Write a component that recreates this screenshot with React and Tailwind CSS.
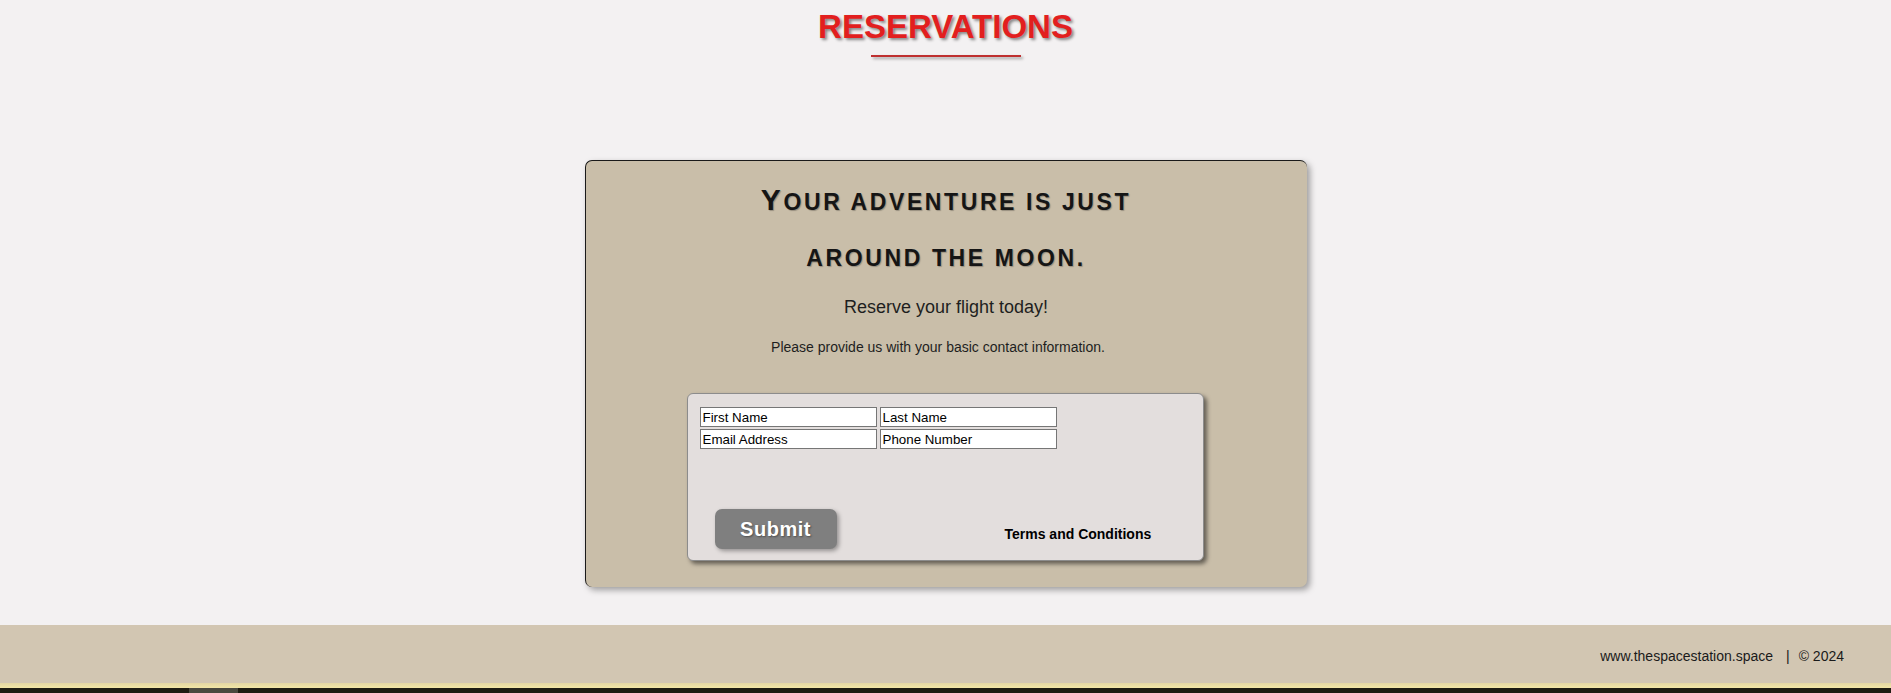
import React from "react";

export default function App() {
  const inputCls =
    "w-[177px] h-[20px] border border-[#767676] bg-white px-[2px] text-[13.33px] text-black placeholder:text-black outline-none";
  return (
    <div className="w-[1891px] h-[693px] bg-[#f3f1f2] flex flex-col overflow-hidden font-['Liberation_Sans',Arial,sans-serif]">
      <header className="flex flex-col items-center pt-[8px]">
        <h1 className="text-[33px] font-bold leading-[38px] text-[#e21f1f] [text-shadow:2px_2px_3px_rgba(0,0,0,0.45)]">
          RESERVATIONS
        </h1>
        <div className="w-[150px] h-[2px] mt-[9px] bg-[#bf3030] shadow-[2px_2px_3px_rgba(0,0,0,0.35)]" />
      </header>

      <main className="mt-[103px] flex justify-center">
        <section className="w-[722px] rounded-[7px] border-t border-l border-[#1a1a1a] bg-[#c9bea9] pt-[13px] pb-[26px] shadow-[3px_3px_6px_rgba(0,0,0,0.35)] flex flex-col items-center text-center">
          <h2 className="text-[23px] font-bold leading-[56px] tracking-[2.6px] text-[#151515] uppercase [text-shadow:1px_1px_1px_rgba(0,0,0,0.25)]">
            <span className="text-[30px] leading-none">Y</span>
            our adventure is just
            <br />
            around the moon.
          </h2>
          <p className="mt-[11px] text-[18px] leading-[21px] text-[#1e1e1e]">
            Reserve your flight today!
          </p>
          <p className="mt-[21px] pr-[16px] text-[14px] leading-[16px] text-[#1e1e1e]">
            Please provide us with your basic contact information.
          </p>

          <form
            className="mt-[38px] mr-[2px] w-[517px] rounded-[6px] border border-[#8c8c8c] bg-[#e3dedd] pt-[13px] px-[12px] pb-[11px] shadow-[3px_3px_4px_rgba(0,0,0,0.5)] text-left"
            onSubmit={(e) => e.preventDefault()}
          >
            <div className="flex flex-col gap-[2px]">
              <div className="flex gap-[3px]">
                <input type="text" placeholder="First Name" className={inputCls} />
                <input type="text" placeholder="Last Name" className={inputCls} />
              </div>
              <div className="flex gap-[3px]">
                <input type="email" placeholder="Email Address" className={inputCls} />
                <input type="tel" placeholder="Phone Number" className={inputCls} />
              </div>
            </div>

            <div className="mt-[60px] flex items-center">
              <button
                type="submit"
                className="ml-[15px] w-[122px] h-[40px] rounded-[7px] bg-[#7f7f7f] text-white text-[20px] font-bold tracking-[0.5px] shadow-[2px_2px_4px_rgba(0,0,0,0.35)] [text-shadow:1px_1px_2px_rgba(0,0,0,0.4)]"
              >
                Submit
              </button>
              <a className="ml-[168px] mt-[10px] text-[14px] font-bold text-black">
                Terms and Conditions
              </a>
            </div>
          </form>
        </section>
      </main>

      <footer className="mt-auto flex flex-col">
        <div className="h-[58px] bg-[#d2c6b2] flex items-center justify-end pr-[47px] pt-[4px] text-[14px] text-[#1a1a1a]">
          <span>www.thespacestation.space</span>
          <span className="ml-[13px] mr-[9px]">|</span>
          <span>© 2024</span>
        </div>
        <div className="h-[5px] bg-gradient-to-b from-[#e3d6a4] to-[#f2e6a6]" />
        <div className="h-[5px] bg-[#1e1c12] flex">
          <div className="ml-[189px] w-[49px] bg-[#4a493f]" />
        </div>
      </footer>
    </div>
  );
}
